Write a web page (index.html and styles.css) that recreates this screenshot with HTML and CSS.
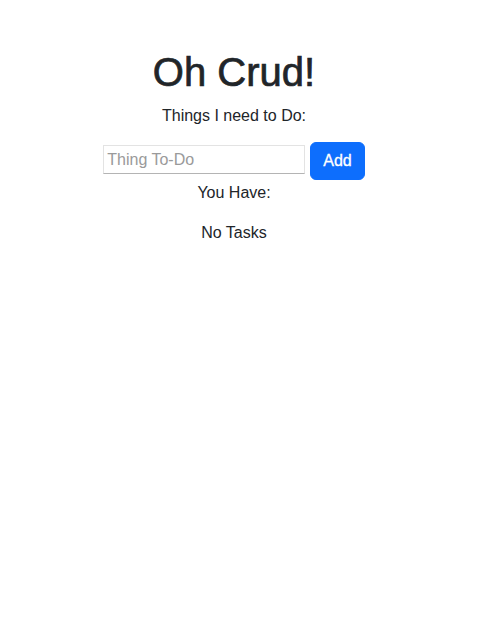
FILE: index.html
```html
<!DOCTYPE html>
<html lang="en">
<head>
<meta charset="utf-8">
<title>Oh Crud!</title>
<link rel="stylesheet" href="styles.css">
</head>
<body>
<div class="app">
  <h1 class="title">Oh Crud!</h1>
  <p class="subtitle">Things I need to Do:</p>
  <form class="add-row">
    <input class="todo-input" type="text" placeholder="Thing To-Do">
    <button class="btn-add" type="button">Add</button>
  </form>
  <p class="have">You Have:</p>
  <p class="tasks">No Tasks</p>
</div>
</body>
</html>
```

FILE: styles.css
```css
* { box-sizing: border-box; }
html, body { margin: 0; padding: 0; background: #fff; }
body {
  font-family: "Liberation Sans", Arial, sans-serif;
  font-size: 16px;
  line-height: 1.5;
  color: #212529;
}
.app {
  padding: 48px 19px 0 0;
  text-align: center;
}
.title {
  margin: 0 0 8px;
  font-size: 40px;
  font-weight: 500;
  line-height: 1.2;
  -webkit-text-stroke: 0.7px currentColor;
}
.subtitle, .have, .tasks {
  margin: 0 0 16px;
}
.subtitle { margin-bottom: 14px; }
.add-row {
  display: flex;
  justify-content: center;
  align-items: center;
  gap: 5px;
  margin: 0 0 1px;
  height: 38px;
}
.todo-input {
  width: 202px;
  height: 29px;
  margin-top: -3px;
  padding: 0 3px;
  font-family: inherit;
  font-size: 16px;
  color: #212529;
  border: 1px solid #e3e3e3;
  border-bottom-color: #b4b4b4;
  border-radius: 0;
  outline: none;
  background: #fff;
}
.todo-input::placeholder { color: #9a9a9a; }
.btn-add {
  height: 38px;
  padding: 6px 12px;
  font-family: inherit;
  font-size: 16px;
  font-weight: 500;
  line-height: 1.5;
  color: #fff;
  background: #0d6efd;
  border: 1px solid #0d6efd;
  border-radius: 6px;
  cursor: pointer;
  -webkit-text-stroke: 0.3px currentColor;
}
```
